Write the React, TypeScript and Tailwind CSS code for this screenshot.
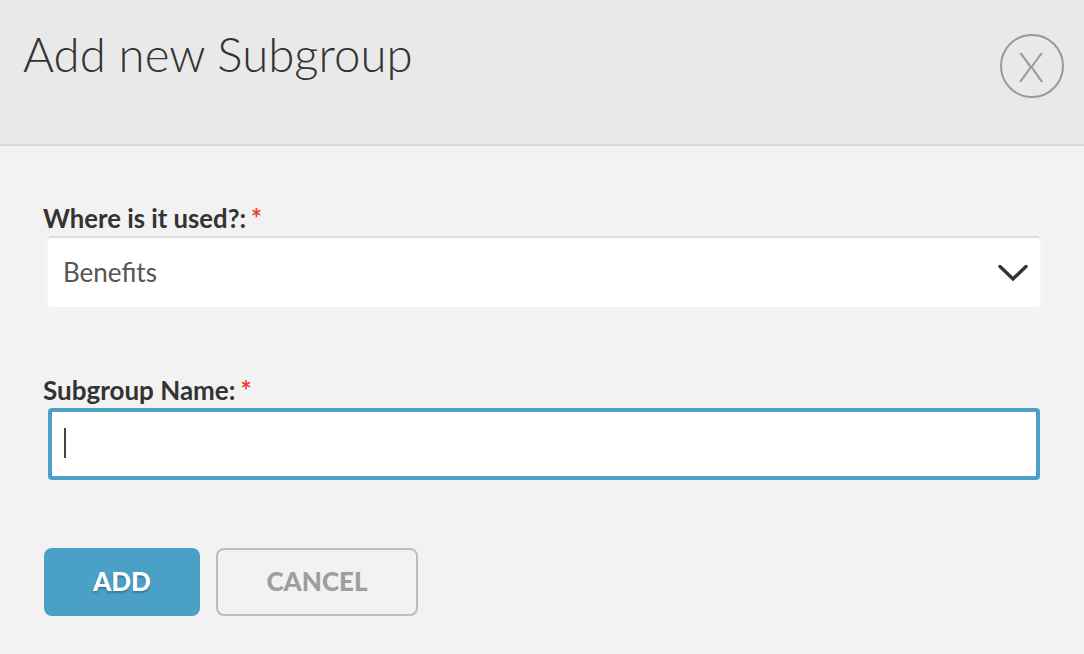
export default function App() {
  return (
    <div className="w-[1084px] h-[654px] overflow-hidden bg-[#f2f2f2] font-['Lato',sans-serif] text-[#333]">
      <header className="relative h-[146px] bg-[#e9e9e9] border-b-2 border-[#d9d9d9] pl-[23px] pt-[22px]">
        <h1 className="text-[47.4px] leading-[64px] font-light text-[#333]">Add new Subgroup</h1>
        <button className="absolute left-[1000px] top-[34px] w-[64px] h-[64px] rounded-full border-2 border-[#999] text-[#999] text-[42px] font-light leading-none flex items-center justify-center pr-[2px]">
          X
        </button>
      </header>
      <main className="pl-[44px] pr-[44px] pt-[55px]">
        <label className="block -ml-px text-[25.7px] leading-[34px] font-bold text-[#333]">
          Where is it used?:<span className="ml-[5px] text-[#f03a2e] font-bold">*</span>
        </label>
        <div className="mt-px ml-1 h-[71px] bg-white rounded-[4px] border-t-2 border-[#dedede] shadow-[0_0_0_4px_#f4f4f4] flex items-center justify-between pl-[15px] pr-[12px]">
          <span className="text-[26px] text-[#555]">Benefits</span>
          <svg width="30" height="18" viewBox="0 0 30 18" fill="none" stroke="#333" strokeWidth="3.4" strokeLinecap="round" strokeLinejoin="miter">
            <path d="M2 2.5 L15 15 L28 2.5" />
          </svg>
        </div>
        <label className="block -ml-px mt-[66px] text-[26px] leading-[34px] font-bold text-[#333]">
          Subgroup Name:<span className="ml-[5px] text-[#f03a2e] font-bold">*</span>
        </label>
        <div className="mt-px ml-1 h-[72px] bg-white rounded-[4px] border-4 border-[#4aa0c6] flex items-center pl-[12px] pb-[2px]">
          <div className="w-[2px] h-[30px] bg-[#444]" />
        </div>
        <div className="flex gap-4 mt-[68px]">
          <button className="w-[156px] h-[68px] pb-[2px] rounded-[8px] bg-[#4aa0c6] text-white text-[26px] font-black [text-shadow:0_2px_2px_rgba(0,0,0,0.25)]">
            ADD
          </button>
          <button className="w-[202px] h-[68px] pb-[2px] rounded-[8px] border-2 border-[#bdbdbd] text-[#9e9e9e] text-[26px] font-black">
            CANCEL
          </button>
        </div>
      </main>
    </div>
  );
}
